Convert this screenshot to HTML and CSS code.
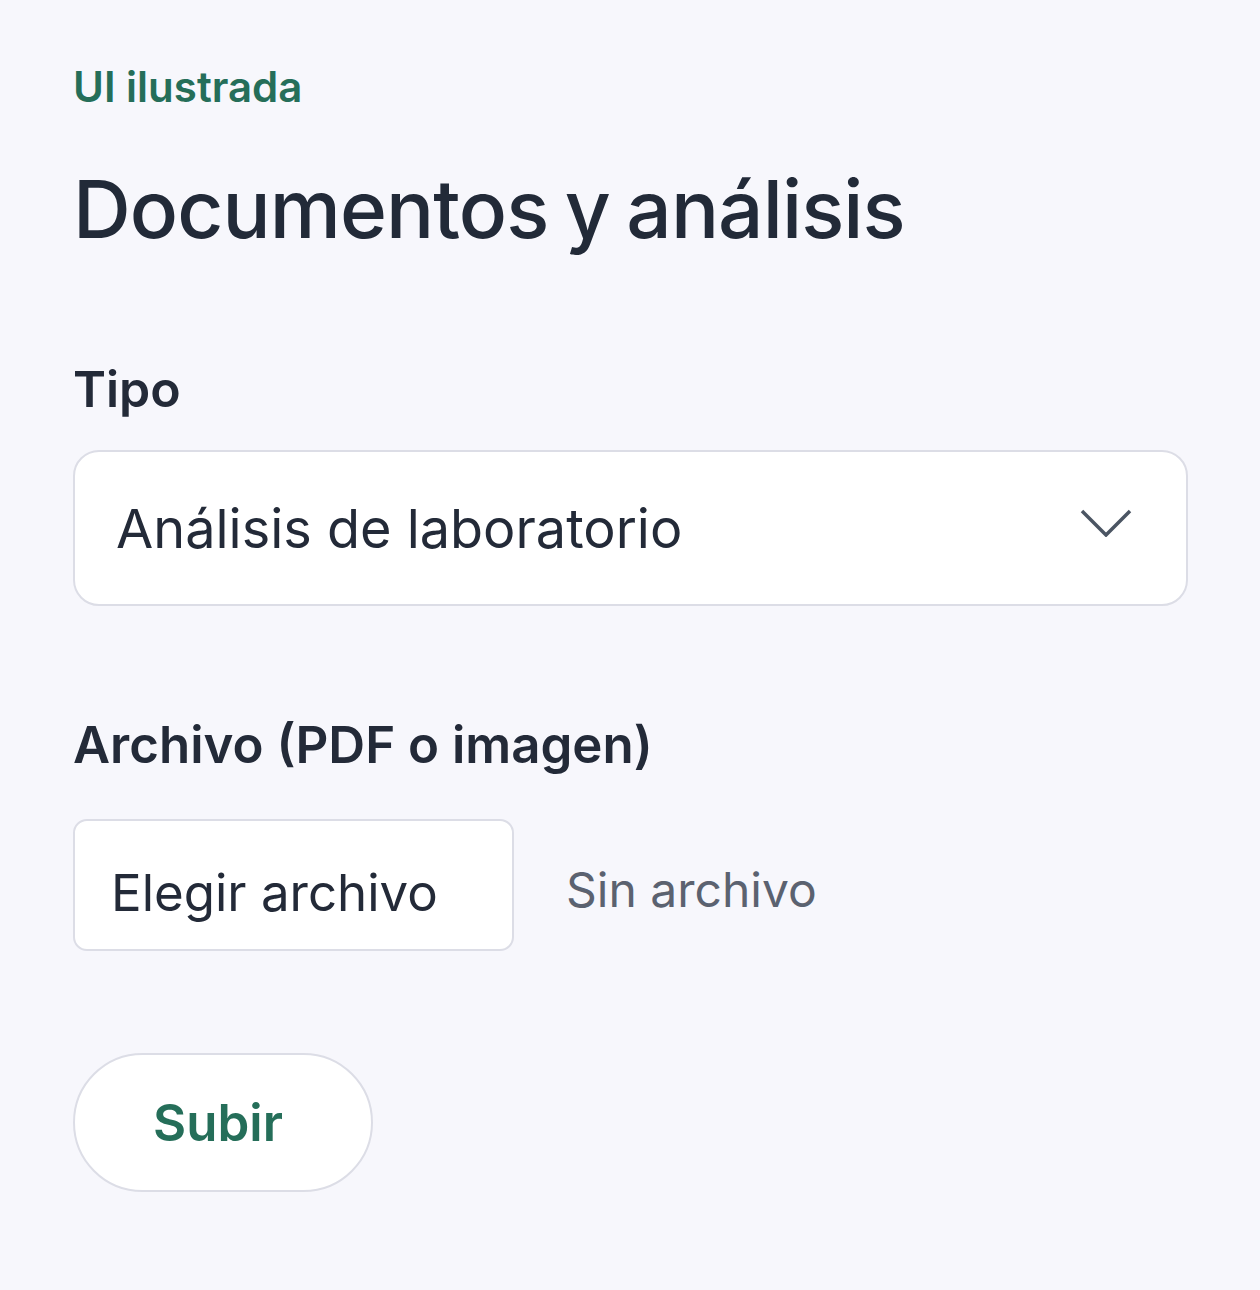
FILE: index.html
```html
<!DOCTYPE html>
<html lang="es">
<head>
<meta charset="utf-8">
<title>Documentos y análisis</title>
<link rel="stylesheet" href="styles.css">
</head>
<body>
<main class="page">
  <p class="eyebrow">UI ilustrada</p>
  <h1 class="title">Documentos y análisis</h1>
  <form class="form">
    <div class="field">
      <label class="label label-tipo" for="tipo">Tipo</label>
      <div class="select">
        <span class="select-value">Análisis de laboratorio</span>
        <svg class="chevron" width="52" height="28" viewBox="0 0 52 28" aria-hidden="true">
          <path d="M2 2 L26 26 L50 2" fill="none" stroke="#4b5563" stroke-width="3.5"/>
        </svg>
      </div>
    </div>
    <div class="field field-file">
      <span class="label label-file">Archivo (PDF o imagen)</span>
      <div class="file-row">
        <span class="file-btn">Elegir archivo</span>
        <span class="file-name">Sin archivo</span>
      </div>
    </div>
    <div class="actions">
      <span class="submit">Subir</span>
    </div>
  </form>
</main>
</body>
</html>
```
FILE: styles.css
```css
* { box-sizing: border-box; }
html, body { margin: 0; padding: 0; }
body {
  background: #f7f7fc;
  font-family: Inter, "Noto Sans", sans-serif;
  color: #232a38;
}
.page {
  padding: 60px 72px 0 73px;
  width: 1260px;
}
.eyebrow {
  margin: 0;
  font-size: 42px;
  font-weight: 600;
  color: #256e59;
  line-height: 54px;
}
.title {
  margin: 50px 0 0;
  font-size: 80px;
  font-weight: 500;
  letter-spacing: -0.9px;
  word-spacing: -4px;
  line-height: 90px;
  color: #222a38;
}
.form { margin-top: 105px; }
.field { display: flex; flex-direction: column; }
.label {
  font-size: 51px;
  font-weight: 600;
  line-height: 60px;
  color: #232a38;
}
.label-tipo { font-size: 50px; }
.label-file { font-size: 51px; }
.select {
  margin-top: 31px;
  height: 156px;
  background: #fff;
  border: 2px solid #dcdde6;
  border-radius: 26px;
  display: flex;
  align-items: center;
  justify-content: space-between;
  padding: 0 54px 0 41px;
}
.select-value {
  font-size: 54px;
  font-weight: 400;
  color: #232a38;
}
.chevron { margin-top: -10px; }
.field-file { margin-top: 109px; }
.file-row {
  margin-top: 44px;
  display: flex;
  align-items: center;
  gap: 52px;
}
.file-btn {
  width: 441px;
  height: 132px;
  background: #fff;
  border: 2px solid #dcdde6;
  border-radius: 14px;
  display: flex;
  align-items: center;
  padding: 14px 0 0 36px;
  font-size: 51px;
  color: #232a38;
}
.file-name {
  font-size: 48px;
  color: #5b6270;
  margin-top: 8px;
}
.actions { margin-top: 102px; }
.submit {
  display: inline-flex;
  align-items: center;
  justify-content: center;
  width: 300px;
  height: 139px;
  padding-right: 10px;
  background: #fff;
  border: 2px solid #dcdde6;
  border-radius: 70px;
  font-size: 51px;
  font-weight: 600;
  color: #256e59;
}
```
